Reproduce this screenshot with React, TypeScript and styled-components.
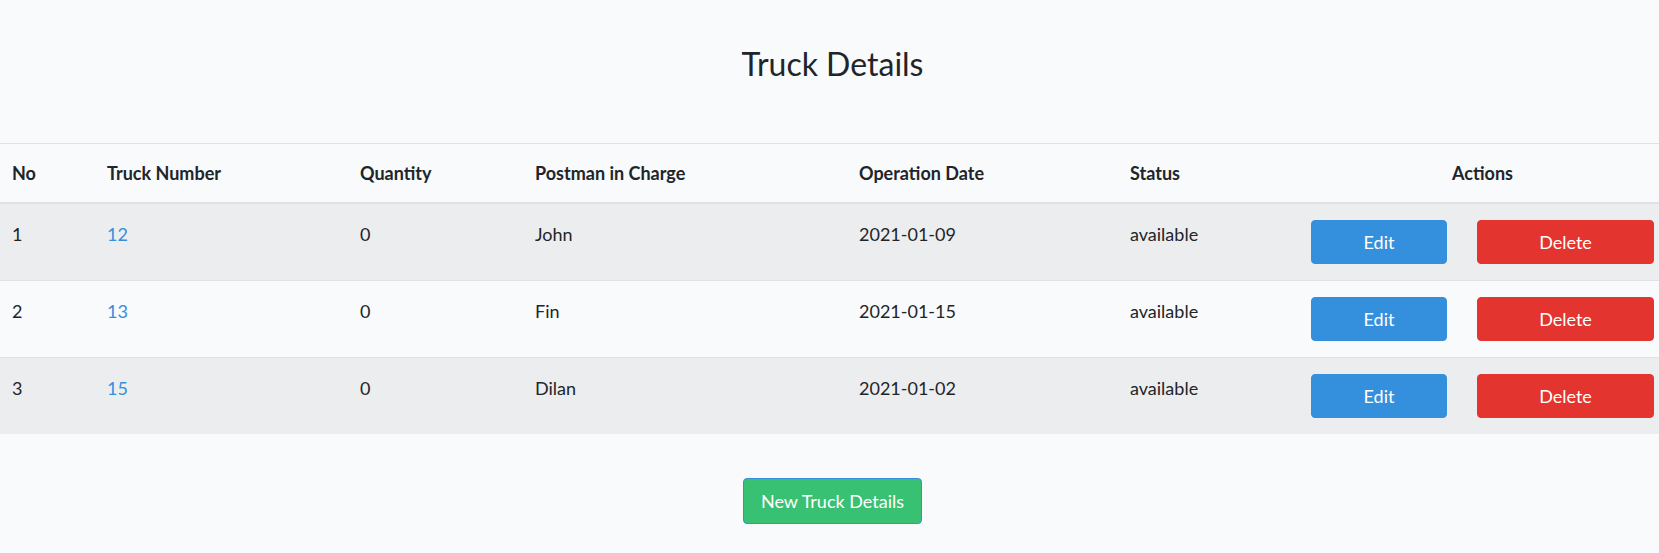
import React from "react";
import styled, { createGlobalStyle } from "styled-components";

const GlobalStyle = createGlobalStyle`
  html, body {
    margin: 0;
    padding: 0;
    background: #f8fafc;
  }
  body {
    font-family: Lato, "Noto Sans", sans-serif;
    font-size: 18px;
    line-height: 1.6;
    color: #212529;
  }
`;

type Truck = {
  no: number;
  number: string;
  quantity: number;
  postman: string;
  date: string;
  status: string;
};

const trucks: Truck[] = [
  { no: 1, number: "12", quantity: 0, postman: "John", date: "2021-01-09", status: "available" },
  { no: 2, number: "13", quantity: 0, postman: "Fin", date: "2021-01-15", status: "available" },
  { no: 3, number: "15", quantity: 0, postman: "Dilan", date: "2021-01-02", status: "available" }
];

const columns = [
  { label: "No", width: 95 },
  { label: "Truck Number", width: 253 },
  { label: "Quantity", width: 175 },
  { label: "Postman in Charge", width: 324 },
  { label: "Operation Date", width: 271 },
  { label: "Status", width: 188 },
  { label: "Actions", width: 353 }
];

const Page = styled.div`
  padding-top: 45px;
  display: flex;
  flex-direction: column;
  align-items: center;
`;

const Title = styled.h2`
  margin: 0 0 60px 6px;
  font-size: 32px;
  font-weight: 400;
  line-height: 1.2;
  color: #212529;
`;

const Table = styled.table`
  width: 100%;
  table-layout: fixed;
  border-collapse: collapse;
`;

const Col = styled.col<{ $width: number }>`
  width: ${({ $width }) => $width}px;
`;

const HeadCell = styled.th<{ $center?: boolean }>`
  padding: 15px 12px 14px;
  text-align: ${({ $center }) => ($center ? "center" : "left")};
  font-weight: 700;
  border-top: 1px solid #dee2e6;
  border-bottom: 2px solid #dee2e6;
  vertical-align: bottom;
`;

const Row = styled.tr<{ $striped: boolean }>`
  background: ${({ $striped }) => ($striped ? "#ecedef" : "transparent")};
`;

const Cell = styled.td`
  padding: 16px 12px 0;
  border-top: 1px solid #dee2e6;
  vertical-align: top;
`;

const ActionCell = styled.td`
  padding: 16px 5px 16px;
  border-top: 1px solid #dee2e6;
  vertical-align: top;
`;

const Actions = styled.div`
  display: flex;
  gap: 30px;
`;

const TruckLink = styled.a`
  color: #3490dc;
  text-decoration: none;
`;

const Button = styled.button<{ $variant: "edit" | "delete" | "create" }>`
  height: ${({ $variant }) => ($variant === "create" ? 46 : 44)}px;
  width: ${({ $variant }) =>
    $variant === "edit" ? "136px" : $variant === "delete" ? "177px" : "auto"};
  padding: 0 17px;
  font-family: inherit;
  font-size: 18px;
  color: #fff;
  border-radius: 4px;
  cursor: pointer;
  background: ${({ $variant }) =>
    $variant === "edit" ? "#3490dc" : $variant === "delete" ? "#e3342f" : "#38c172"};
  border: 1px solid
    ${({ $variant }) =>
      $variant === "edit" ? "#3490dc" : $variant === "delete" ? "#e3342f" : "#3490dc"};
`;

const Footer = styled.div`
  align-self: stretch;
  padding: 44px 0 29px 6px;
  display: flex;
  justify-content: center;
`;

const App: React.FC = () => {
  return (
    <>
      <GlobalStyle />
      <Page>
        <Title>Truck Details</Title>
        <Table>
          <colgroup>
            {columns.map(c => (
              <Col key={c.label} $width={c.width} />
            ))}
          </colgroup>
          <thead>
            <tr>
              {columns.map(c => (
                <HeadCell key={c.label} $center={c.label === "Actions"}>
                  {c.label}
                </HeadCell>
              ))}
            </tr>
          </thead>
          <tbody>
            {trucks.map((t, i) => (
              <Row key={t.no} $striped={i % 2 === 0}>
                <Cell>{t.no}</Cell>
                <Cell>
                  <TruckLink href="#">{t.number}</TruckLink>
                </Cell>
                <Cell>{t.quantity}</Cell>
                <Cell>{t.postman}</Cell>
                <Cell>{t.date}</Cell>
                <Cell>{t.status}</Cell>
                <ActionCell>
                  <Actions>
                    <Button $variant="edit">Edit</Button>
                    <Button $variant="delete">Delete</Button>
                  </Actions>
                </ActionCell>
              </Row>
            ))}
          </tbody>
        </Table>
        <Footer>
          <Button $variant="create">New Truck Details</Button>
        </Footer>
      </Page>
    </>
  );
};

export default App;
